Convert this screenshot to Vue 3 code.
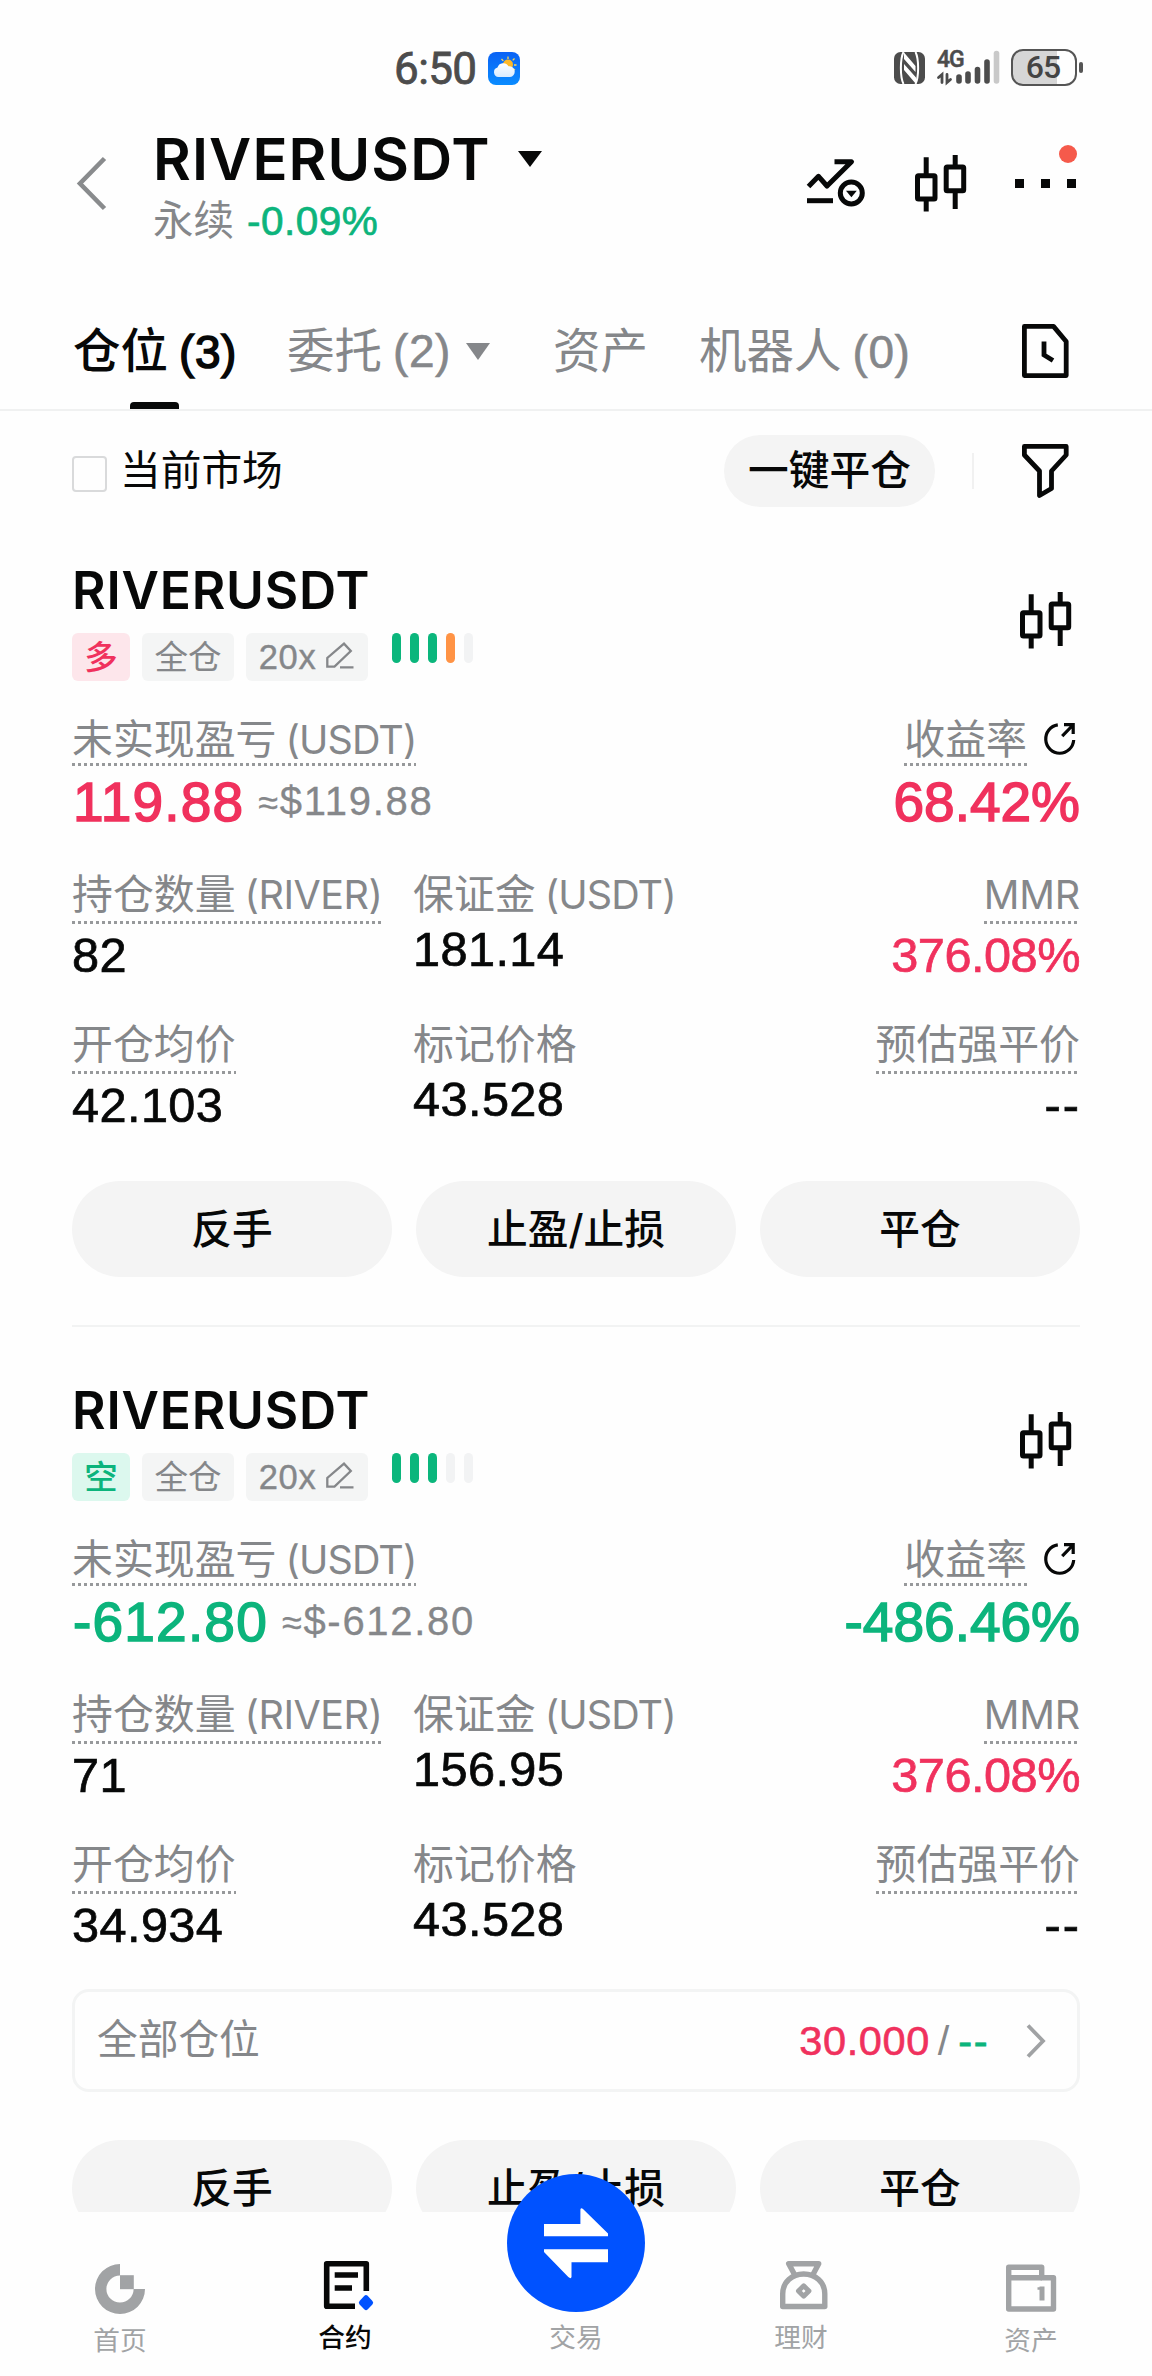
<script setup>
const positions = [
  {
    symbol: 'RIVERUSDT', side: '多', tone: 'up', risk: ['g', 'g', 'g', 'o', 'n'],
    pnl: '119.88', approx: '$119.88', roi: '68.42%',
    fields: [
      { label: '持仓数量', unit: '(RIVER)', value: '82', dotted: true, wide: true },
      { label: '保证金', unit: '(USDT)', value: '181.14' },
      { latin: 'MMR', value: '376.08%', dotted: true, red: true },
      { label: '开仓均价', value: '42.103', dotted: true },
      { label: '标记价格', value: '43.528' },
      { label: '预估强平价', value: '--', dotted: true },
    ],
  },
  {
    symbol: 'RIVERUSDT', side: '空', tone: 'down', risk: ['g', 'g', 'g', 'n', 'n'],
    pnl: '-612.80', approx: '$-612.80', roi: '-486.46%', summary: true,
    fields: [
      { label: '持仓数量', unit: '(RIVER)', value: '71', dotted: true, wide: true },
      { label: '保证金', unit: '(USDT)', value: '156.95' },
      { latin: 'MMR', value: '376.08%', dotted: true, red: true },
      { label: '开仓均价', value: '34.934', dotted: true },
      { label: '标记价格', value: '43.528' },
      { label: '预估强平价', value: '--', dotted: true },
    ],
  },
]
const actions = ['反手', '止盈/止损', '平仓']
</script>

<template>
  <div class="page">
    <div class="content">
      <!-- status bar -->
      <div class="status">
        <div class="clock">
          <span class="time">6:50</span>
          <svg width="32" height="33" viewBox="0 0 32 33">
            <defs>
              <linearGradient id="sky" x1="0" y1="0" x2="0" y2="1"><stop offset="0" stop-color="#0a62f5" /><stop offset="1" stop-color="#0a8cff" /></linearGradient>
              <linearGradient id="cloud" x1="0" y1="0" x2="0" y2="1"><stop offset="0" stop-color="#fff" /><stop offset="1" stop-color="#d9ecff" /></linearGradient>
            </defs>
            <rect width="32" height="33" rx="8" fill="url(#sky)" />
            <circle cx="20" cy="12.5" r="5" fill="#fdb827" />
            <path d="M20 4.500v2.500M13.500 7l1.800 1.900M26.500 6.500l-1.800 1.900M28.500 13h-2.500M27 18l-1.500-1" stroke="#ffd84d" stroke-width="1.300" />
            <path d="M10.500 25a4.800 4.800 0 0 1-1-9.400a6 6 0 0 1 11-1.400a5.400 5.400 0 0 1 1.500 10.800z" fill="url(#cloud)" />
          </svg>
        </div>
        <div class="indicators">
          <svg width="31" height="32" viewBox="0 0 31 32">
            <rect width="31" height="32" rx="6.500" fill="#4c4c4c" />
            <path d="M9.500 0C6 7 6 25 9.500 32M21.500 0C25 7 25 25 21.500 32" fill="none" stroke="#fff" stroke-width="2" />
            <path d="M10 0.500L21.500 14V20L10 7ZM10 12L22 25.500V32L10 18Z" fill="#fff" />
          </svg>
          <div class="cell">
            <span class="gen">4G</span>
            <svg width="63" height="34" viewBox="0 0 63 34">
              <g stroke="#4c4c4c" stroke-width="2.800" fill="none" stroke-linecap="round">
                <path d="M1.500 27.500L5 24.500V32.500M10 24.500V32.500L13.500 29.500" />
              </g>
              <g stroke-width="5.600" stroke-linecap="round" stroke="#4c4c4c">
                <path d="M22 27v4M31 24v7M40.500 19.500v11.500M50 12v19" />
                <path d="M59.500 3.500v27.500" stroke="#c9c9c9" />
              </g>
            </svg>
          </div>
          <div class="battery"><span>65</span></div>
          <i class="nub"></i>
        </div>
      </div>

      <!-- market header -->
      <header class="market">
        <svg class="back" width="30" height="54" viewBox="0 0 30 54"><path d="M27.500 1.500L3 26.500L27.500 51.500" fill="none" stroke="#898b8d" stroke-width="4.600" /></svg>
        <div class="pair">
          <div class="pair-name"><span>RIVERUSDT</span><svg width="24" height="16" viewBox="0 0 24 16"><path d="M0 0H24L12 16Z" fill="#070808" /></svg></div>
          <div class="pair-sub">永续<span>-0.09%</span></div>
        </div>
        <div class="tools">
          <svg class="t-chart" width="58" height="48" viewBox="0 0 58 48" fill="none" stroke="#070808">
            <path d="M1.500 27.500L11.500 17.300L20 27L44.500 2.700H27.500" stroke-width="5" stroke-linejoin="round" />
            <path d="M0 41.700H26" stroke-width="5" />
            <circle cx="44.300" cy="34" r="11" stroke-width="5" />
            <path d="M39 31.700H49.800L44.400 38.200Z" fill="#070808" stroke="none" />
          </svg>
          <svg class="t-candle" width="52" height="57" viewBox="0 0 52 57" fill="none" stroke="#070808" stroke-width="5">
            <path d="M11.200 2.300V19M11.200 45V56.500M40.200 0V11M40.200 37V54" />
            <rect x="2.500" y="20.800" width="17.500" height="23.200" rx="1" /><rect x="31.200" y="12" width="17.500" height="23.800" rx="1" />
          </svg>
          <div class="more"><i></i><i></i><i></i><b></b></div>
        </div>
      </header>

      <!-- tabs -->
      <nav class="tabs">
        <div class="tab active">仓位<span>(3)</span></div>
        <div class="tab orders">委托<span>(2)</span><svg width="24" height="17" viewBox="0 0 24 17"><path d="M0 0H24L12 17Z" fill="#85878a" /></svg></div>
        <div class="tab assets">资产</div>
        <div class="tab bots">机器人<span>(0)</span></div>
        <svg class="history" width="47" height="54" viewBox="0 0 47 54" fill="none" stroke="#070808" stroke-width="4.800">
          <path d="M2.400 2.400H31.500L44.200 17.500V51.600H2.400Z" stroke-linejoin="round" /><path d="M22 17.500V31L31 36.500" />
        </svg>
      </nav>

      <!-- filter row -->
      <div class="filters">
        <i class="checkbox"></i>
        <span class="only">当前市场</span>
        <div class="close-all">一键平仓</div>
        <i class="sep"></i>
        <svg width="47" height="55" viewBox="0 0 47 55" fill="none" stroke="#070808" stroke-width="4.800" stroke-linejoin="round">
          <path d="M2.400 2.400H44.200V11L29.500 27V44.500L17.500 51.500V27L2.400 11Z" />
        </svg>
      </div>

      <!-- positions -->
      <section v-for="(p, i) in positions" :key="i" class="card">
        <div class="head">
          <div>
            <div class="symbol">{{ p.symbol }}</div>
            <div class="tags">
              <span class="tag side" :class="p.tone">{{ p.side }}</span>
              <span class="tag mode">全仓</span>
              <span class="tag lever"><span class="times">20x</span>
                <svg width="28" height="27" viewBox="0 0 28 27" fill="none" stroke="#85878a" stroke-width="2.300"><path d="M1.300 24.700V16L18 1.600L24.800 9L8.500 24.700ZM14 25.300H27.500" /></svg>
              </span>
              <span class="risk"><i v-for="(r, k) in p.risk" :key="k" :class="r"></i></span>
            </div>
          </div>
          <svg class="candles" width="52" height="57" viewBox="0 0 52 57" fill="none" stroke="#070808" stroke-width="5">
            <path d="M11.200 2.300V19M11.200 45V56.500M40.200 0V11M40.200 37V54" />
            <rect x="2.500" y="20.800" width="17.500" height="23.200" rx="1" /><rect x="31.200" y="12" width="17.500" height="23.800" rx="1" />
          </svg>
        </div>

        <div class="pnl">
          <div>
            <div class="label dotted">未实现盈亏<span class="unit">(USDT)</span></div>
            <div class="pair-values">
              <span class="big" :class="p.tone">{{ p.pnl }}</span>
              <span class="approx"><em>≈</em>{{ p.approx }}</span>
            </div>
          </div>
          <div class="right">
            <div class="roi-label">
              <span class="label dotted">收益率</span>
              <svg width="32" height="32" viewBox="0 0 32 32" fill="none" stroke="#070808" stroke-width="3.200"><path d="M13.800 1.800A14 14.300 0 1 0 29.700 17M18.200 13.200L28.500 2.500M20 1.700H29.200V11" /></svg>
            </div>
            <div class="big roi" :class="p.tone">{{ p.roi }}</div>
          </div>
        </div>

        <div class="grid">
          <div v-for="(f, k) in p.fields" :key="k" class="field">
            <div class="label" :class="{ dotted: f.dotted }">{{ f.label }}<span v-if="f.unit" class="unit" :class="{ wide: f.wide }">{{ f.unit }}</span><span v-if="f.latin" class="latin">{{ f.latin }}</span></div>
            <div class="value" :class="{ red: f.red, dash: f.value === '--' }">{{ f.value }}</div>
          </div>
        </div>

        <div v-if="p.summary" class="summary">
          <span class="all">全部仓位</span>
          <span class="num">30.000</span><span class="slash">/</span><span class="none">--</span>
          <svg width="20" height="34" viewBox="0 0 20 34"><path d="M2 1.500L17 17L2 32.500" fill="none" stroke="#a0a2a4" stroke-width="3.800" /></svg>
        </div>

        <div class="actions"><div v-for="a in actions" :key="a">{{ a }}</div></div>
        <hr v-if="!p.summary" />
      </section>
    </div>

    <!-- bottom navigation -->
    <footer class="bar">
      <div class="item low">
        <svg width="52" height="52" viewBox="-1 -1 52 52" fill="#a1a3a5"><path d="M25 0A25 25 0 1 0 50 25H38.600A13.600 13.600 0 1 1 25 11.400Z" /><path d="M25 11.200H38.800V25.200H25Z" /></svg>
        <span>首页</span>
      </div>
      <div class="item on">
        <svg width="52" height="52" viewBox="-5 -1 52 52" fill="none" stroke="#070808" stroke-width="5.600">
          <path d="M42.300 30V2.700H2.700V45.300H31" stroke-linejoin="round" /><path d="M10.700 14H34M10.700 27H28" />
          <path d="M42 36.700L46.600 41.700L42 46.500L37.400 41.700Z" fill="#0052ff" stroke="#0052ff" stroke-width="5" stroke-linejoin="round" />
        </svg>
        <span>合约</span>
      </div>
      <div class="item">
        <div class="fab">
          <svg width="64" height="71" viewBox="0 0 64 71" fill="#fff"><path d="M0 16H36.400V1.500Q37 -0.800 39 1L64 25.500V28.300H0Z" /><path d="M64 41.300H0V44L24.300 69Q27 71.300 27.500 69V54.300H64Z" /></svg>
        </div>
        <i class="spacer"></i>
        <span>交易</span>
      </div>
      <div class="item">
        <svg width="52" height="52" viewBox="-5 -1 52 52" fill="none" stroke="#a1a3a5" stroke-width="5.400" stroke-linejoin="round">
          <path d="M14.500 13.500L8.700 2.700H38.700L33 13.500" /><path d="M2.700 45.500V33C2.700 21 12 13 23.700 13S44.800 21 44.800 33V45.500Z" />
          <path d="M23.700 24.800L29 30L23.700 35.200L18.400 30Z" stroke-width="4.800" />
        </svg>
        <span>理财</span>
      </div>
      <div class="item low">
        <svg width="52" height="52" viewBox="-1 -1.500 52 52" fill="none" stroke="#a1a3a5" stroke-width="5.400" stroke-linejoin="round">
          <path d="M2.700 2.700H35.700V13.200H47.500V44.500H2.700Z" /><path d="M2.700 13.200H36" /><path d="M36 22V36" stroke-width="5" /><path d="M31.500 24H36" stroke-width="2.500" />
        </svg>
        <span>资产</span>
      </div>
    </footer>
  </div>
</template>

<style>
body { margin: 0; background: #fefefe; }
</style>

<style scoped>
.page {
  width: 1152px; height: 2376px; display: flex; flex-direction: column; overflow: hidden;
  background: #fefefe; color: #070808;
  font-family: Inter, "Noto Sans CJK SC", sans-serif;
}
.page svg { display: block; flex: none; overflow: visible; }
.content { height: 2212px; overflow: hidden; flex: none; }
i, em { font-style: normal; }

.status { height: 136px; display: flex; align-items: flex-start; }
.clock { display: flex; margin-left: 394px; width: 500px; padding-top: 52px; }
.time { font: 400 44px/34px Roboto, sans-serif; color: #4c4c4c; width: 94px; letter-spacing: -0.600px; -webkit-text-stroke: 0.800px #4c4c4c; }
.indicators { display: flex; padding-top: 49px; }
.indicators > svg { margin-top: 3px; }
.cell { margin-left: 12px; width: 63px; display: grid; }
.cell > * { grid-area: 1 / 1; }
.cell svg { margin-top: 1px; }
.gen { font: 500 23px/21px Roboto, sans-serif; color: #4c4c4c; letter-spacing: -1px; -webkit-text-stroke: 0.500px #4c4c4c; }
.battery {
  box-sizing: border-box; width: 66px; height: 37px; margin-left: 11px; border: 2.500px solid #555; border-radius: 12px;
  background: linear-gradient(90deg, #d6d6d6 0 44px, #fefefe 44px); text-align: center;
}
.battery span { font: 500 32px/33px Roboto, sans-serif; color: #444; letter-spacing: -1px; margin-left: -2px; }
.nub { width: 4px; height: 11px; border-radius: 2px; background: #555; margin: 13px 0 0 2px; }

.market { height: 164px; display: flex; }
.back { margin: 21px 0 0 77px; }
.pair { margin-left: 46px; width: 654px; }
.pair-name { font-weight: 600; font-size: 58px; line-height: 46px; letter-spacing: 1.100px; display: flex; align-items: center; }
.pair-name span { width: 365px; }
.pair-sub { margin-top: 18px; font-size: 40.500px; line-height: 42px; color: #85878a; }
.pair-sub span { margin-left: 13px; color: #0cb47c; font-family: "Liberation Sans", sans-serif; letter-spacing: 0.500px; -webkit-text-stroke: 0.700px #0cb47c; }
.tools { display: flex; }
.t-chart { margin-top: 23px; }
.t-candle { margin: 19px 0 0 50px; }
.more { display: flex; gap: 17.500px; margin: 43px 0 0 48px; position: relative; height: 9px; }
.more i { width: 8.500px; height: 8.500px; background: #070808; }
.more b { position: absolute; right: -1px; top: -34px; width: 18px; height: 18px; border-radius: 50%; background: #f55a4b; }

.tabs { height: 109px; border-bottom: 2px solid #f0f1f1; display: flex; color: #85878a; font-size: 47.500px; line-height: 60px; }
.tab { padding-top: 21px; white-space: nowrap; position: relative; }
.tab span { margin-left: 11px; font-family: "Liberation Sans", sans-serif; font-size: 46px; letter-spacing: 0.600px; -webkit-text-stroke: 0.600px currentColor; }
.active { margin-left: 73px; width: 214px; color: #070808; font-weight: 500; }
.active span { -webkit-text-stroke-width: 1.500px; }
.active::after { content: ""; position: absolute; left: 57px; bottom: 0; width: 49px; height: 7px; border-radius: 4px 4px 0 0; background: #070808; }
.orders { width: 266px; display: flex; }
.orders svg { margin: 22px 0 0 15px; }
.assets { width: 146px; }
.bots { width: 323px; }
.history { margin-top: 24px; }

.filters { height: 120px; display: flex; align-items: center; padding-left: 72px; }
.checkbox { box-sizing: border-box; width: 35px; height: 36px; border: 2.500px solid #d9dadb; border-radius: 4px; margin-top: 6px; }
.only { margin-left: 13px; width: 604px; font-size: 40.700px; line-height: 50px; }
.close-all { width: 211px; height: 72px; border-radius: 36px; background: #f4f4f4; text-align: center; line-height: 72px; font-size: 40.700px; font-weight: 500; }
.sep { width: 2px; height: 36px; background: #f1f1f1; margin: 0 48px 0 37px; }

.card { padding: 28px 72px 0; }
.card + .card { padding-top: 52px; }
.head { display: flex; justify-content: space-between; align-items: center; }
.candles { margin-right: 8px; }
.symbol { font-weight: 600; font-size: 51.500px; line-height: 62px; letter-spacing: 0.800px; }
.tags { display: flex; margin-top: 12px; }
.tag { height: 48px; border-radius: 6px; background: #f4f5f5; color: #85878a; font-size: 33.500px; line-height: 48px; text-align: center; }
.side { width: 58px; font-weight: 500; }
.side.up { background: #fde6eb; color: #f0315d; }
.side.down { background: #dcf8ee; color: #0cb47c; }
.mode { width: 92px; margin-left: 12px; }
.lever { width: 122px; margin-left: 12px; display: flex; justify-content: center; align-items: center; gap: 10px; }
.times { font-family: "Liberation Sans", sans-serif; font-size: 34.500px; letter-spacing: 0.700px; margin-left: -1px; -webkit-text-stroke: 0.400px currentColor; }
.lever svg { margin-top: -4px; }
.risk { display: flex; gap: 9px; margin-left: 24px; }
.risk i { width: 9px; height: 30px; border-radius: 5px; background: #f2f3f4; }
.risk .g { background: #0bb67c; }
.risk .o { background: #ff9345; }

.label { width: max-content; font-size: 40.900px; line-height: 51px; color: #85878a; white-space: nowrap; }
.unit { margin-left: 9px; font-size: 39.500px; letter-spacing: -0.900px; }
.unit.wide { letter-spacing: -0.500px; }
.latin { font-size: 39.500px; letter-spacing: -0.200px; }
.dotted { background: repeating-linear-gradient(90deg, #97999b 0 3px, transparent 3px 6px) left bottom / 100% 3px no-repeat; }
.pnl { display: flex; justify-content: space-between; margin-top: 33px; }
.pnl .label { height: 52px; display: block; }
.right { display: flex; flex-direction: column; align-items: flex-end; }
.roi-label { display: flex; gap: 17px; padding-right: 4px; }
.roi-label svg { margin-top: 9px; }
.pair-values { display: flex; padding-left: 1px; }
.big { height: 72px; line-height: 72px; font-family: "Liberation Sans", sans-serif; font-size: 55px; letter-spacing: 1.200px; white-space: nowrap; -webkit-text-stroke: 1.500px currentColor; }
.roi { letter-spacing: 0; }
.up { color: #f0315d; }
.down { color: #0cb47c; }
.approx { margin-left: 14px; line-height: 71px; color: #85878a; font-family: "Liberation Sans", sans-serif; font-size: 40px; letter-spacing: 1.700px; white-space: nowrap; -webkit-text-stroke: 0.300px #85878a; }
.approx em { font-size: 36px; }

.grid { margin-top: 31px; display: grid; grid-template-columns: 341px 1fr auto; row-gap: 35px; }
.field .label { height: 55px; }
.field .value { height: 60px; line-height: 62px; font-family: "Liberation Sans", sans-serif; font-size: 48.700px; letter-spacing: 0.400px; -webkit-text-stroke: 0.700px currentColor; }
.field:nth-child(3n + 2) .value { margin-top: -6px; }
.field:nth-child(3n) { display: flex; flex-direction: column; align-items: flex-end; }
.field:nth-child(3n) .value { letter-spacing: -0.500px; }
.field .value.dash { letter-spacing: 2px; margin-right: -1px; }
.value.red { color: #f0315d; }

.actions { display: flex; gap: 24px; margin-top: 47px; }
.actions div { width: 320px; height: 96px; border-radius: 48px; background: #f4f4f4; text-align: center; font-size: 40.700px; font-weight: 500; line-height: 97px; }
.summary + .actions { margin-top: 48px; }
hr { border: 0; height: 2px; background: #f2f3f3; margin: 48px 0 0; }

.summary { box-sizing: border-box; height: 103px; margin-top: 35px; border: 3px solid #f3f4f4; border-radius: 17px; padding: 0 31px 0 22px; display: flex; align-items: center; font: 41.500px/50px "Liberation Sans", sans-serif; }
.summary .all { color: #85878a; flex: 1; font: 40.700px/50px Inter, "Noto Sans CJK SC", sans-serif; margin-top: -1px; }
.summary .num { color: #f0315d; letter-spacing: 0.600px; margin-top: 1px; -webkit-text-stroke: 0.600px currentColor; }
.summary .slash { color: #85878a; margin: 0 9px 0 8px; }
.summary .none { color: #0cb47c; letter-spacing: 1.500px; margin-top: 1px; -webkit-text-stroke: 0.800px currentColor; }
.summary svg { margin-left: 37px; }

.bar { height: 164px; display: grid; grid-template-columns: 225px 231px 225px 230px 52px; padding-left: 94px; background: #fefefe; }
.item { width: 52px; padding-top: 48px; position: relative; color: #a1a3a5; }
.item.low { padding-top: 51px; }
.item span { display: block; margin: 10px -4px 0 -4px; font-size: 26.700px; line-height: 30px; text-align: center; white-space: nowrap; }
.item.on { color: #070808; }
.item.on span { font-weight: 500; }
.spacer { display: block; height: 52px; }
.fab { position: absolute; left: -43px; top: -38px; width: 138px; height: 138px; border-radius: 50%; background: #0052ff; display: flex; align-items: center; justify-content: center; }
</style>
